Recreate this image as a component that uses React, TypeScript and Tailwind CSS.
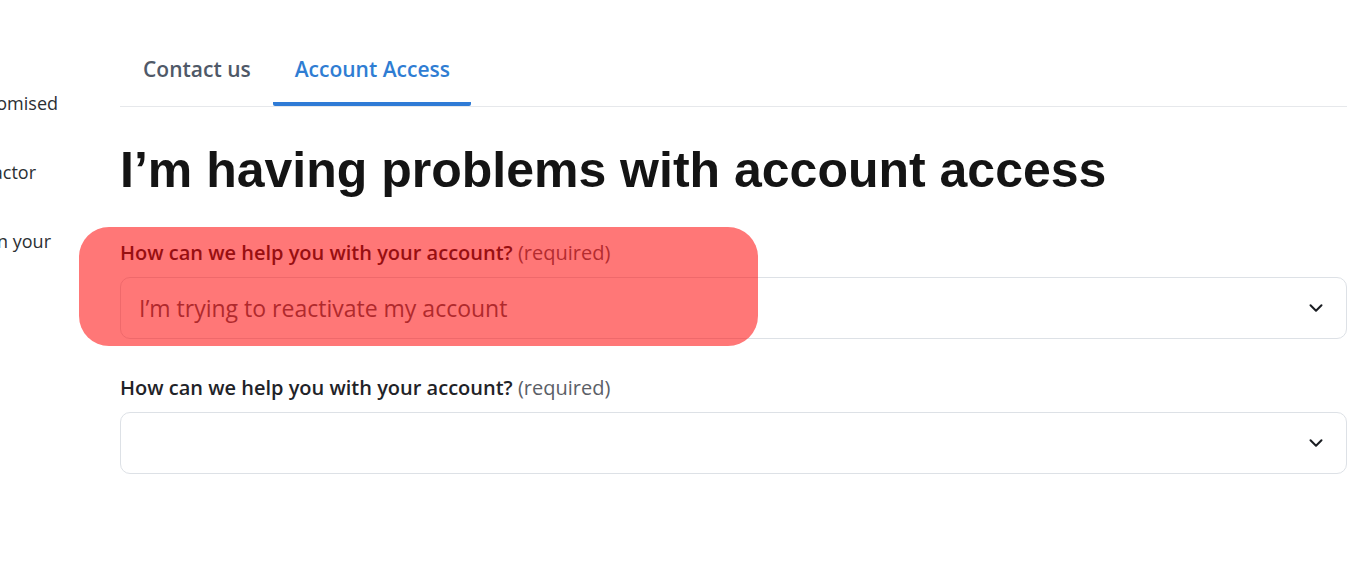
import { ChevronDown } from 'lucide-react';

const body = { fontFamily: '"Open Sans", "Noto Sans", sans-serif' };

function SelectField({ value }: { value?: string }) {
  return (
    <div className="flex flex-col">
      <label className="text-[20px] leading-[28px] text-[#1f2328]" style={body}>
        <span className="font-semibold">How can we help you with your account?</span>{' '}
        <span className="text-[#5b6067]">(required)</span>
      </label>
      <div className="mt-[10px] h-[62px] rounded-[10px] border border-[#dde1e6] bg-white flex items-center justify-between pl-[18px] pr-[19px]">
        <span className="text-[23px] text-[#555a61]" style={body}>
          {value}
        </span>
        <ChevronDown className="w-[22px] h-[22px] text-[#1a1d22]" strokeWidth={2.2} />
      </div>
    </div>
  );
}

export default function App() {
  return (
    <div className="relative min-h-[574px] bg-white flex overflow-hidden">
      {/* Sidebar (scrolled off to the left) */}
      <div
        className="w-[58px] shrink-0 flex flex-col items-end pt-[90px] gap-[43px] text-[18px] leading-[26px] text-[#2b2f33] whitespace-nowrap"
        style={body}
      >
        <span>Compromised</span>
        <span className="pr-[22px]">Two-factor</span>
        <span className="pr-[7px]">Log in your</span>
      </div>

      {/* Main */}
      <div className="ml-[62px] mr-[19px] flex-1 flex flex-col">
        {/* Tabs */}
        <div className="flex items-end border-b border-[#e6e8eb] pt-[54px]" style={body}>
          <div className="pl-[23px] pr-[22px] pb-[22px] text-[21px] leading-[30px] font-semibold text-[#4f5968]">
            Contact us
          </div>
          <div className="pl-[22px] pr-[21px] pb-[18px] text-[21px] leading-[30px] font-semibold text-[#2f7dd3] border-b-[4px] border-[#2f7bd6] rounded-b-[2px]">
            Account Access
          </div>
        </div>

        <h1
          className="mt-[33px] text-[50px] leading-[60px] font-bold text-[#141414]"
          style={{ fontFamily: '"Liberation Sans", Arial, sans-serif' }}
        >
          I’m having problems with account access
        </h1>

        <div className="mt-[39px] flex flex-col gap-[35px]">
          <SelectField value="I’m trying to reactivate my account" />
          <SelectField />
        </div>
      </div>

      {/* Highlight overlay */}
      <div className="absolute left-[79px] top-[227px] w-[679px] h-[119px] rounded-[30px] bg-[rgba(255,0,0,0.535)] pointer-events-none" />
    </div>
  );
}
